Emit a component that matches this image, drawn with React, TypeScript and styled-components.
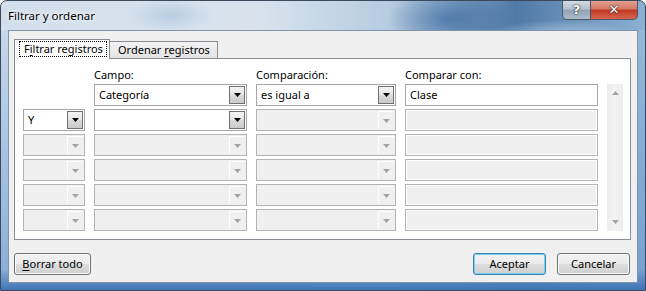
import React from "react";
import styled, { createGlobalStyle, css } from "styled-components";

const Global = createGlobalStyle`
  html, body { margin: 0; padding: 0; background: #fff; }
  body { font-family: "Noto Sans", "Open Sans", sans-serif; font-size: 11px; color: #000; }
  * { box-sizing: border-box; }
`;

const Window = styled.div`
  width: 646px;
  height: 291px;
  display: flex;
  flex-direction: column;
  border: 1px solid #3a4a5c;
  border-radius: 7px 7px 0 0;
  overflow: hidden;
  background:
    radial-gradient(ellipse 90px 40px at 450px 18px, rgba(40, 90, 150, 0.55), transparent 70%),
    radial-gradient(ellipse 120px 30px at 560px 40px, rgba(200, 220, 240, 0.9), transparent 70%),
    radial-gradient(ellipse 60px 24px at 170px 14px, rgba(150, 180, 215, 0.45), transparent 70%),
    linear-gradient(90deg, #d2dfec 0%, #d8e3ee 40%, #b7cce1 60%, #4f7aa6 80%, #8db1d4 100%);
`;

const TitleBar = styled.div`
  height: 29px;
  display: flex;
  justify-content: space-between;
  align-items: flex-start;
  padding-left: 7px;
`;

const Title = styled.div`
  padding-top: 7px;
  font-size: 11.5px;
  color: #000;
  white-space: nowrap;
  text-shadow: 0 0 6px #fff, 0 0 3px #fff;
`;

const CaptionButtons = styled.div`
  display: flex;
  margin-right: 7px;
  margin-top: -1px;
`;

const CaptionButton = styled.div<{ $close?: boolean }>`
  height: 20px;
  width: ${(p) => (p.$close ? 47 : 29)}px;
  display: flex;
  align-items: center;
  justify-content: center;
  border: 1px solid #4a5866;
  border-top: none;
  font-family: "DejaVu Sans", sans-serif;
  font-weight: bold;
  font-size: 13px;
  color: #fff;
  text-shadow: 0 0 2px #222, 0 0 1px #222;
  ${(p) =>
    p.$close
      ? css`
          border-radius: 0 0 5px 0;
          border-left: none;
          background: linear-gradient(#e4a597 0%, #d77a66 45%, #c23a22 55%, #d66550 100%);
        `
      : css`
          border-radius: 0 0 0 5px;
          background: linear-gradient(#d6dde6 0%, #b7c3d0 45%, #93a3b5 55%, #adbccb 100%);
        `}
`;

const Frame = styled.div`
  flex: 1;
  display: flex;
  padding: 0 7px 7px 7px;
  background:
    linear-gradient(180deg, transparent 0%, transparent 92%, #3f74b4 100%),
    linear-gradient(180deg, rgba(170, 200, 230, 0.3) 0%, rgba(110, 155, 210, 0.75) 100%);
`;

const Client = styled.div`
  flex: 1;
  display: flex;
  flex-direction: column;
  background: #f0f0f0;
  border: 1px solid #7f93a8;
  padding: 8px 6px 7px 5px;
`;

const TabStrip = styled.div`
  height: 19px;
  display: flex;
  align-items: flex-end;
  position: relative;
  z-index: 1;
`;

const Tab = styled.div<{ $active?: boolean }>`
  display: flex;
  align-items: center;
  white-space: nowrap;
  border: 1px solid #898c95;
  border-bottom: none;
  ${(p) =>
    p.$active
      ? css`
          width: 96px;
          height: 20px;
          margin-bottom: -1px;
          background: #fff;
          padding: 1px 2px 2px 4px;
        `
      : css`
          width: 109px;
          height: 17px;
          margin-left: -1px;
          background: linear-gradient(#f3f3f3, #e3e3e3);
          padding: 0 0 1px 8px;
        `}
`;

const FocusBox = styled.span`
  display: block;
  width: 100%;
  height: 16px;
  line-height: 15px;
  outline: 1px dotted #000;
  outline-offset: -1px;
  padding-left: 5px;
`;

const U = styled.span`
  text-decoration: underline;
  text-underline-offset: 2px;
`;

const Panel = styled.div`
  height: 182px;
  border: 1px solid #898c95;
  background: #fff;
  padding: 7px 7px 8px 8px;
  display: grid;
  grid-template-columns: 62px 153px 140px 193px 16px;
  grid-template-rows: 15px repeat(6, 22px);
  column-gap: 9px;
  row-gap: 3px;
`;

const Label = styled.div<{ $col: number }>`
  grid-column: ${(p) => p.$col};
  grid-row: 1;
  line-height: 15px;
  margin-top: 1px;
  white-space: nowrap;
  color: #000;
`;

const ComboBox = styled.div<{ $disabled?: boolean }>`
  display: flex;
  align-items: stretch;
  height: 22px;
  border: 1px solid ${(p) => (p.$disabled ? "#b3b3b3" : "#a6a6a6")};
  background: ${(p) => (p.$disabled ? "#f0f0f0" : "#fff")};
`;

const ComboText = styled.div`
  flex: 1;
  padding-left: 4px;
  line-height: 20px;
  white-space: nowrap;
  overflow: hidden;
`;

const DropButton = styled.div<{ $disabled?: boolean }>`
  width: 16px;
  display: flex;
  align-items: center;
  justify-content: center;
  ${(p) =>
    p.$disabled
      ? css`
          border-left: 1px solid #fff;
          border-top: 1px solid #fff;
          margin: 1px 1px 1px 0;
          background: #f0f0f0;
        `
      : css`
          margin: 1px;
          border: 1px solid #707070;
          background: linear-gradient(#f4f4f4 0%, #e8e8e8 45%, #d8d8d8 55%, #cbcbcb 100%);
        `}
`;

const TextBox = styled.div<{ $disabled?: boolean }>`
  height: 22px;
  border: 1px solid ${(p) => (p.$disabled ? "#b3b3b3" : "#a6a6a6")};
  background: ${(p) => (p.$disabled ? "#f0f0f0" : "#fff")};
  ${(p) => p.$disabled && css`box-shadow: inset 0 0 0 1px #fff;`}
  padding-left: 4px;
  line-height: 20px;
`;

const Scroll = styled.div`
  grid-column: 5;
  grid-row: 2 / span 6;
  background: linear-gradient(90deg, #ececec, #f3f3f3 50%, #ececec);
  display: flex;
  flex-direction: column;
  justify-content: space-between;
  align-items: center;
  padding: 7px 0 7px;
`;

const ButtonRow = styled.div`
  display: flex;
  justify-content: space-between;
  margin-top: 13px;
  padding-right: 1px;
`;

const RightButtons = styled.div`
  display: flex;
  gap: 11px;
`;

const Button = styled.div<{ $default?: boolean; $w: number }>`
  width: ${(p) => p.$w}px;
  height: 22px;
  display: flex;
  align-items: center;
  justify-content: center;
  white-space: nowrap;
  border: 1px solid ${(p) => (p.$default ? "#3c7fb1" : "#707070")};
  border-radius: 3px;
  background: linear-gradient(#f2f2f2 0%, #ebebeb 48%, #dddddd 52%, #cfcfcf 100%);
  box-shadow: inset 0 0 0 1px ${(p) => (p.$default ? "#72d1f7" : "#fcfcfc")};
  padding-bottom: 1px;
`;

const Arrow: React.FC<{ disabled?: boolean; up?: boolean }> = ({ disabled, up }) => (
  <svg width="7" height="4" viewBox="0 0 7 4" style={{ display: "block", transform: up ? "rotate(180deg)" : undefined }}>
    <path d="M0 0H7L3.5 4Z" fill={disabled ? "#a3a3a3" : "#000"} />
  </svg>
);

const Combo: React.FC<{ text?: string; disabled?: boolean; col: number; row: number }> = ({ text, disabled, col, row }) => (
  <ComboBox $disabled={disabled} style={{ gridColumn: col, gridRow: row }}>
    <ComboText>{text}</ComboText>
    <DropButton $disabled={disabled}>
      <Arrow disabled={disabled} />
    </DropButton>
  </ComboBox>
);

export default function App() {
  const rows = [2, 3, 4, 5, 6, 7];
  return (
    <>
      <Global />
      <Window>
        <TitleBar>
          <Title>Filtrar y ordenar</Title>
          <CaptionButtons>
            <CaptionButton>?</CaptionButton>
            <CaptionButton $close>✕</CaptionButton>
          </CaptionButtons>
        </TitleBar>
        <Frame>
          <Client>
            <TabStrip>
              <Tab $active>
                <FocusBox>
                  F<U>i</U>ltrar registros
                </FocusBox>
              </Tab>
              <Tab>
                <span>
                  Ordenar <U>r</U>egistros
                </span>
              </Tab>
            </TabStrip>
            <Panel>
              <Label $col={2}>Campo:</Label>
              <Label $col={3}>Comparación:</Label>
              <Label $col={4}>Comparar con:</Label>

              <Combo col={2} row={2} text="Categoría" />
              <Combo col={3} row={2} text="es igual a" />
              <TextBox style={{ gridColumn: 4, gridRow: 2 }}>Clase</TextBox>

              <Combo col={1} row={3} text="Y" />
              <Combo col={2} row={3} />
              <Combo col={3} row={3} disabled />
              <TextBox $disabled style={{ gridColumn: 4, gridRow: 3 }} />

              {rows.slice(2).map((r) => (
                <React.Fragment key={r}>
                  <Combo col={1} row={r} disabled />
                  <Combo col={2} row={r} disabled />
                  <Combo col={3} row={r} disabled />
                  <TextBox $disabled style={{ gridColumn: 4, gridRow: r }} />
                </React.Fragment>
              ))}
              <Scroll>
                <Arrow disabled up />
                <Arrow disabled />
              </Scroll>
            </Panel>
            <ButtonRow>
              <Button $w={77}>
                <span>
                  <U>B</U>orrar todo
                </span>
              </Button>
              <RightButtons>
                <Button $w={73} $default>Aceptar</Button>
                <Button $w={73}>Cancelar</Button>
              </RightButtons>
            </ButtonRow>
          </Client>
        </Frame>
      </Window>
    </>
  );
}
